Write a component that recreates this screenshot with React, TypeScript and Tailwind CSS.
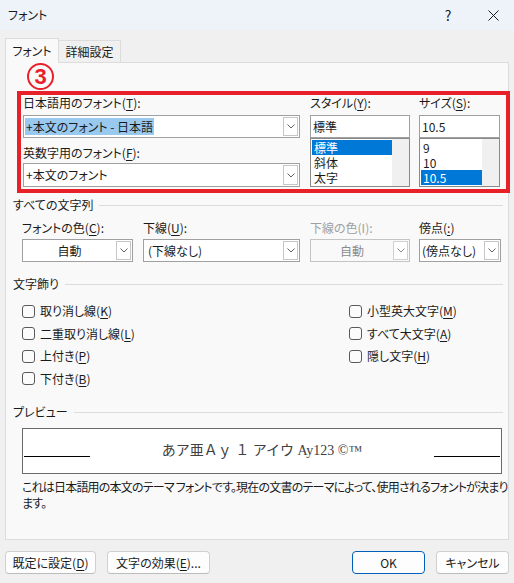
import React from 'react';

// mnemonic letter with underline
const U = ({ c }: { c: string }) => <span className="underline underline-offset-2">{c}</span>;

function Chevron({ color = '#606060' }: { color?: string }) {
  return (
    <svg width="8" height="5" viewBox="0 0 8 5" fill="none" stroke={color} strokeWidth="1">
      <path d="M0.5 0.5 L4 4 L7.5 0.5" />
    </svg>
  );
}

function ArrowBox() {
  return (
    <div className="my-px mr-px w-[15px] shrink-0 border border-[#c6c6c6] bg-white flex items-center justify-center">
      <Chevron />
    </div>
  );
}

function Section({ title, className = '' }: { title: string; className?: string }) {
  return (
    <div className={`flex items-center h-[14px] pl-[7px] pr-[5px] ${className}`}>
      <span>{title}</span>
      <div className="ml-[6px] flex-1 h-px bg-[#dcdcdc]" />
    </div>
  );
}

function Check({ children }: { children: React.ReactNode }) {
  return (
    <div className="flex items-center h-[22.5px]">
      <div className="w-[13px] h-[13px] rounded-[3px] border border-[#5a5a5a] bg-[#fbfbfb]" />
      <span className="ml-[5px]">{children}</span>
    </div>
  );
}

function ListBox({ items, selected }: { items: string[]; selected: number }) {
  return (
    <div className="flex h-[49px] border border-[#8a8a8a] bg-white">
      <div className="flex-1 pt-px pl-px">
        {items.map((t, i) => (
          <div
            key={t}
            className={`h-[15px] leading-[15px] pl-[2px] ${i === selected ? 'bg-[#0078d7] text-white' : ''}`}
          >
            {t}
          </div>
        ))}
      </div>
      <div className="w-[17px] bg-[#f0f0f0]" />
    </div>
  );
}

function Button({ children, primary }: { children: React.ReactNode; primary?: boolean }) {
  return (
    <div
      className={`h-[23px] rounded-[4px] bg-[#fdfdfd] flex items-center justify-center border ${
        primary ? 'border-[#005fb8] w-[73px]' : 'border-[#d0d0d0] border-b-[#bcbcbc]'
      }`}
    >
      {children}
    </div>
  );
}

export default function App() {
  return (
    <div className="w-[514px] h-[583px] bg-[#f0f0f0] flex flex-col text-[12px] leading-[14px] text-[#1a1a1a] font-['Noto_Sans_CJK_JP',sans-serif] [font-feature-settings:'palt'] overflow-hidden">
      {/* title bar */}
      <div className="h-[30px] bg-[#eef3f9] flex items-center pl-[8px]">
        <span>フォント</span>
        <div className="ml-auto flex items-center">
          <span className="text-[14px] w-[20px] mr-[15px] text-center">?</span>
          <div className="w-[41px] flex justify-center">
            <svg width="11" height="11" viewBox="0 0 11 11" stroke="#1a1a1a" strokeWidth="1">
              <path d="M0.5 0.5 L10.5 10.5 M10.5 0.5 L0.5 10.5" />
            </svg>
          </div>
        </div>
      </div>

      {/* tabs */}
      <div className="pt-[8px] pl-[5px] flex items-end">
        <div className="relative z-10 -mb-px h-[25px] w-[54px] border border-b-0 border-[#dcdcdc] bg-[#f9f9f9] flex items-center justify-center">
          フォント
        </div>
        <div className="h-[22px] w-[62px] border border-l-0 border-b-0 border-[#dcdcdc] bg-[#f0f0f0] flex items-center justify-center">
          詳細設定
        </div>
      </div>

      {/* panel */}
      <div className="mx-[5px] h-[478px] border border-[#dcdcdc] bg-[#f9f9f9] flex flex-col">
        <div className="ml-[21px] w-[27px] h-[27px] rounded-full border-[2px] border-[#e8202a] flex items-center justify-center text-[#e8202a] font-['Liberation_Sans',sans-serif] font-bold text-[22px] leading-none">
          3
        </div>

        {/* red annotation box */}
        <div className="mt-px ml-[11px] w-[493px] h-[102px] border-4 border-[#e8202a] pl-[2px] pt-px flex">
          <div className="w-[277px] flex flex-col">
            <div>
              日本語用のフォント(<U c="T" />):
            </div>
            <div className="mt-[5px] h-[23px] flex border border-[#a0a0a0] bg-white">
              <div className="flex-1 flex items-center pl-px">
                <span className="bg-[#99c9ef] leading-[17px] px-px">+本文のフォント - 日本語</span>
              </div>
              <ArrowBox />
            </div>
            <div className="mt-[8px]">
              英数字用のフォント(<U c="F" />):
            </div>
            <div className="mt-[3px] h-[24px] flex border border-[#a0a0a0] bg-white">
              <div className="flex-1 flex items-center pl-[2px]">+本文のフォント</div>
              <ArrowBox />
            </div>
          </div>

          <div className="ml-[10px] w-[100px] flex flex-col">
            <div>
              スタイル(<U c="Y" />):
            </div>
            <div className="mt-[5px] h-[23px] flex items-center pl-[2px] border border-[#a0a0a0] bg-white">標準</div>
            <ListBox items={['標準', '斜体', '太字']} selected={0} />
          </div>

          <div className="ml-[9px] w-[81px] flex flex-col">
            <div>
              サイズ(<U c="S" />):
            </div>
            <div className="mt-[5px] h-[23px] flex items-center pl-[2px] border border-[#a0a0a0] bg-white">10.5</div>
            <ListBox items={['9', '10', '10.5']} selected={2} />
          </div>
        </div>

        <Section title="すべての文字列" className="mt-[5px]" />

        <div className="mt-[9px] pl-[16px] flex">
          <div className="w-[121px]">
            フォントの色(<U c="C" />):
          </div>
          <div className="w-[167px]">
            下線(<U c="U" />):
          </div>
          <div className="w-[109px] text-[#a0a0a0]">下線の色(I):</div>
          <div>
            傍点(<U c=":" />)
          </div>
        </div>

        <div className="mt-[4px] pl-[16px] flex">
          <div className="w-[111px] h-[23px] flex border border-[#a0a0a0] bg-white">
            <div className="flex-1 flex items-center justify-center">自動</div>
            <ArrowBox />
          </div>
          <div className="ml-[10px] w-[157px] h-[23px] flex border border-[#a0a0a0] bg-white">
            <div className="flex-1 flex items-center pl-[4px]">(下線なし)</div>
            <ArrowBox />
          </div>
          <div className="ml-[10px] w-[100px] h-[23px] flex border border-[#c4c4c4] bg-[#f9f9f9] text-[#8a8a8a]">
            <div className="flex-1 flex items-center justify-center">自動</div>
            <div className="my-px mr-px w-[15px] shrink-0 border border-[#d0d0d0] bg-white flex items-center justify-center">
              <Chevron color="#8a8a8a" />
            </div>
          </div>
          <div className="ml-[9px] w-[82px] h-[23px] flex border border-[#a0a0a0] bg-white">
            <div className="flex-1 flex items-center pl-[2px]">(傍点なし)</div>
            <ArrowBox />
          </div>
        </div>

        <Section title="文字飾り" className="mt-[15px]" />

        <div className="mt-[9px] pl-[16px] flex">
          <div className="w-[327px]">
            <Check>
              取り消し線(<U c="K" />)
            </Check>
            <Check>
              二重取り消し線(<U c="L" />)
            </Check>
            <Check>
              上付き(<U c="P" />)
            </Check>
            <Check>
              下付き(<U c="B" />)
            </Check>
          </div>
          <div>
            <Check>
              小型英大文字(<U c="M" />)
            </Check>
            <Check>
              すべて大文字(<U c="A" />)
            </Check>
            <Check>
              隠し文字(<U c="H" />)
            </Check>
          </div>
        </div>

        <Section title="プレビュー" className="mt-[15px]" />

        <div className="mt-[9px] ml-[16px] w-[480px] h-[46px] border border-[#6a6a6a] bg-white flex">
          <div className="ml-px mt-[27px] w-[66px] h-px bg-black" />
          <div className="flex-1 flex justify-center pt-[13px] text-[14px] leading-[18px] text-[#404040] font-['Liberation_Serif','Noto_Sans_CJK_JP',serif] [font-feature-settings:normal]">
            あア亜Ａｙ １ アイウ Ay123 ©™
          </div>
          <div className="mr-px mt-[27px] w-[66px] h-px bg-black" />
        </div>

        <div className="mt-[5px] ml-[16px] leading-[16px] whitespace-nowrap tracking-[-0.8px]">
          これは日本語用の本文のテーマ フォントです。現在の文書のテーマによって、使用されるフォントが決まり
          <br />
          ます。
        </div>
      </div>

      {/* buttons */}
      <div className="mt-[11px] px-[5px] flex">
        <div className="w-[91px]">
          <Button>
            既定に設定(<U c="D" />)
          </Button>
        </div>
        <div className="ml-[11px] w-[103px]">
          <Button>
            文字の効果(<U c="E" />)...
          </Button>
        </div>
        <div className="ml-auto flex gap-[11px]">
          <Button primary>OK</Button>
          <div className="w-[73px]">
            <Button>キャンセル</Button>
          </div>
        </div>
      </div>
    </div>
  );
}
